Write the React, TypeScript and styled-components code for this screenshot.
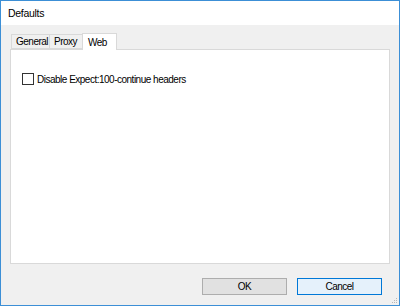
import React from 'react';
import styled, { createGlobalStyle } from 'styled-components';

const GlobalStyle = createGlobalStyle`
  html, body {
    margin: 0;
    padding: 0;
    background: #ffffff;
  }
  * {
    box-sizing: border-box;
  }
`;

const Window = styled.div`
  width: 400px;
  height: 306px;
  border: 1px solid #3c8fd6;
  display: flex;
  flex-direction: column;
  font-family: "Liberation Sans", Arial, sans-serif;
  font-size: 10px;
  letter-spacing: -0.5px;
  color: #000;
  position: relative;
`;

const TitleBar = styled.div`
  height: 24px;
  background: #ffffff;
  display: flex;
  align-items: center;
  padding-left: 7px;
  font-size: 10.5px;
  letter-spacing: -0.3px;
`;

const Body = styled.div`
  flex: 1;
  background: #f0f0f0;
  display: flex;
  flex-direction: column;
  padding: 8px 9px 10px 9px;
`;

const TabStrip = styled.div`
  display: flex;
  align-items: flex-end;
  height: 16px;
  padding-left: 2px;
  position: relative;
  z-index: 1;
`;

const Tab = styled.div<{ $active?: boolean; $w: number }>`
  width: ${({ $w }) => $w}px;
  height: ${({ $active }) => ($active ? '17px' : '15px')};
  margin-bottom: ${({ $active }) => ($active ? '-1px' : '0')};
  padding-top: ${({ $active }) => ($active ? '1px' : '0')};
  padding-left: ${({ $active }) => ($active ? '5px' : '4px')};
  background: ${({ $active }) => ($active ? '#ffffff' : '#f0f0f0')};
  border: 1px solid #d9d9d9;
  border-bottom: ${({ $active }) => ($active ? 'none' : '1px solid #d9d9d9')};
  margin-left: -1px;
  display: flex;
  align-items: center;
  white-space: nowrap;
  color: #000;
`;

const Panel = styled.div`
  flex: 1;
  background: #ffffff;
  border: 1px solid #d9d9d9;
  padding: 23px 11px;
`;

const CheckRow = styled.label`
  display: flex;
  align-items: center;
  gap: 3px;
`;

const CheckBox = styled.span`
  width: 12px;
  height: 12px;
  border: 1px solid #333333;
  background: #ffffff;
  display: inline-block;
`;

const Footer = styled.div`
  display: flex;
  justify-content: flex-end;
  gap: 10px;
  padding: 14px 8px 0 0;
`;

const Button = styled.div<{ $default?: boolean }>`
  width: 85px;
  height: 17px;
  display: flex;
  align-items: center;
  justify-content: center;
  background: ${({ $default }) => ($default ? '#e5f1fb' : '#e1e1e1')};
  border: 1px solid ${({ $default }) => ($default ? '#0078d7' : '#adadad')};
  color: #000;
`;

const Grip = styled.svg`
  position: absolute;
  right: 1px;
  bottom: 1px;
`;

export default function App() {
  return (
    <>
      <GlobalStyle />
      <Window>
        <TitleBar>Defaults</TitleBar>
        <Body>
          <TabStrip>
            <Tab $w={39}>General</Tab>
            <Tab $w={34}>Proxy</Tab>
            <Tab $w={35} $active>Web</Tab>
          </TabStrip>
          <Panel>
            <CheckRow>
              <CheckBox />
              Disable Expect:100-continue headers
            </CheckRow>
          </Panel>
          <Footer>
            <Button>OK</Button>
            <Button $default>Cancel</Button>
          </Footer>
        </Body>
        <Grip width="7" height="7" viewBox="0 0 7 7">
          <rect x="5" y="1" width="1" height="1" fill="#b8b8b8" />
          <rect x="3" y="3" width="1" height="1" fill="#b8b8b8" />
          <rect x="5" y="3" width="1" height="1" fill="#b8b8b8" />
          <rect x="1" y="5" width="1" height="1" fill="#b8b8b8" />
          <rect x="3" y="5" width="1" height="1" fill="#b8b8b8" />
          <rect x="5" y="5" width="1" height="1" fill="#b8b8b8" />
        </Grip>
      </Window>
    </>
  );
}
